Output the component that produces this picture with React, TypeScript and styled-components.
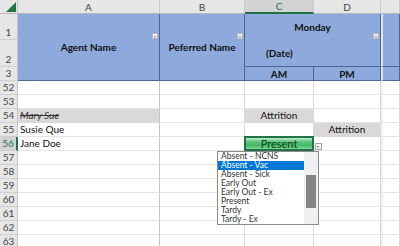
import React from "react";
import styled, { createGlobalStyle, css } from "styled-components";

const GlobalStyle = createGlobalStyle`
  html, body {
    margin: 0;
    padding: 0;
    background: #fff;
    overflow: hidden;
  }
  body {
    font-family: Lato, "Liberation Sans", Arial, sans-serif;
  }
`;

const GRID = "#dadada";
const HEAD_LINE = "#4d6794";
const BLUE = "#8ea9db";
const GREEN = "#217346";

const Sheet = styled.div`
  position: relative;
  display: grid;
  grid-template-columns: 18px 142px 85px 69px 67px 1fr;
  grid-template-rows: 14px 26px 27px 14px repeat(12, 14px);
  width: 400px;
  height: 246px;
  overflow: hidden;
  font-size: 10px;
  color: #111;
`;

type Place = { $c: number; $r: number; $w?: number; $h?: number };

const place = css<Place>`
  grid-column: ${(p) => p.$c} / span ${(p) => p.$w ?? 1};
  grid-row: ${(p) => p.$r} / span ${(p) => p.$h ?? 1};
`;

const Corner = styled.div<Place>`
  ${place};
  position: relative;
  background: #e6e6e6;
  border-right: 1px solid #c6c6c6;
  border-bottom: 1px solid #b8b8b8;
  box-sizing: border-box;
  &::after {
    content: "";
    position: absolute;
    right: 1px;
    bottom: 1px;
    border-style: solid;
    border-width: 0 0 10px 10px;
    border-color: transparent transparent ${GREEN} transparent;
  }
`;

const ColHead = styled.div<Place & { $active?: boolean }>`
  ${place};
  display: flex;
  align-items: center;
  justify-content: center;
  box-sizing: border-box;
  background: ${(p) => (p.$active ? "#d3d3d3" : "#e6e6e6")};
  color: ${(p) => (p.$active ? GREEN : "#444")};
  border-right: 1px solid #cbcbcb;
  border-bottom: ${(p) => (p.$active ? `2px solid ${GREEN}` : "1px solid #b8b8b8")};
  font-size: 10px;
`;

const RowHead = styled.div<Place & { $active?: boolean }>`
  ${place};
  display: flex;
  align-items: flex-end;
  justify-content: center;
  padding-bottom: 1px;
  box-sizing: border-box;
  background: ${(p) => (p.$active ? "#d3d3d3" : "#e6e6e6")};
  color: ${(p) => (p.$active ? GREEN : "#444")};
  border-bottom: 1px solid #d0d0d0;
  border-right: ${(p) => (p.$active ? `2px solid ${GREEN}` : "1px solid #c6c6c6")};
  font-size: 10px;
  line-height: 12px;
`;

const HeadCell = styled.div<Place & { $align?: string; $pad?: number; $edge?: boolean; $open?: boolean }>`
  ${place};
  position: relative;
  display: flex;
  align-items: center;
  justify-content: ${(p) => p.$align ?? "center"};
  padding-left: ${(p) => p.$pad ?? 0}px;
  box-sizing: border-box;
  background: ${BLUE};
  border-right: 1px solid ${HEAD_LINE};
  border-bottom: ${(p) => (p.$open ? "none" : `1px solid ${HEAD_LINE}`)};
  border-left: ${(p) => (p.$edge ? "2px solid #dfe6f2" : "none")};
  font-weight: 700;
  color: #111;
`;

const FilterButton = styled.span`
  position: absolute;
  top: 19px;
  right: 1px;
  width: 6px;
  height: 6px;
  box-sizing: border-box;
  background: #f5f5f5;
  border: 1px solid #b4b4b4;
  &::after {
    content: "";
    position: absolute;
    left: 1px;
    top: 1.5px;
    border-style: solid;
    border-width: 2px 1.5px 0 1.5px;
    border-color: #777 transparent transparent transparent;
  }
`;

const Cell = styled.div<
  Place & {
    $fill?: string;
    $align?: string;
    $strike?: boolean;
    $edge?: boolean;
    $line?: string;
  }
>`
  ${place};
  display: flex;
  align-items: center;
  justify-content: ${(p) => p.$align ?? "flex-start"};
  padding-left: ${(p) => (p.$align ? 0 : 2)}px;
  box-sizing: border-box;
  background: ${(p) => p.$fill ?? "#fff"};
  border-right: 1px solid ${(p) => p.$line ?? GRID};
  border-bottom: 1px solid ${(p) => (p.$fill ? p.$fill : "#e4e4e4")};
  border-left: ${(p) => (p.$edge ? "2px solid #f0f0f0" : "none")};
  line-height: 13px;
  white-space: nowrap;
  ${(p) =>
    p.$strike &&
    css`
      font-style: italic;
      text-decoration: line-through;
      color: #333;
    `}
`;

const PresentCell = styled.div<Place>`
  ${place};
  position: relative;
  display: flex;
  align-items: center;
  justify-content: center;
  box-sizing: border-box;
  background: linear-gradient(#c4ecce 0%, #58c477 35%, #44bb66 70%, #86d49b 100%);
  border: 2px solid ${GREEN};
  margin: -1px 0 0 -1px;
  color: #0a3f1c;
  font-size: 11px;
  line-height: 12px;
`;

const ListArrow = styled.span`
  position: absolute;
  right: -10px;
  bottom: -1px;
  width: 7px;
  height: 7px;
  box-sizing: border-box;
  background: #f4f4f4;
  border: 1px solid #a6a6a6;
  &::after {
    content: "";
    position: absolute;
    left: 1px;
    top: 2px;
    border-style: solid;
    border-width: 2px 1.5px 0 1.5px;
    border-color: #666 transparent transparent transparent;
  }
`;

const ListBox = styled.div`
  position: absolute;
  left: 217px;
  top: 151px;
  width: 102px;
  height: 74px;
  box-sizing: border-box;
  display: flex;
  background: #fff;
  border: 1px solid #8a8a8a;
  z-index: 2;
`;

const Options = styled.ul`
  flex: 1;
  margin: 0;
  padding: 0;
  list-style: none;
  overflow: hidden;
`;

const Option = styled.li<{ $selected?: boolean }>`
  height: 9px;
  line-height: 9px;
  padding-left: 3px;
  font-size: 8.5px;
  color: ${(p) => (p.$selected ? "#fff" : "#333")};
  background: ${(p) => (p.$selected ? "#0078d7" : "transparent")};
  white-space: nowrap;
`;

const ScrollTrack = styled.div`
  width: 14px;
  background: #f0f0f0;
  display: flex;
  justify-content: center;
  padding-top: 23px;
  box-sizing: border-box;
`;

const ScrollThumb = styled.div`
  width: 10px;
  height: 33px;
  background: #858585;
`;

const options = [
  "Absent - NCNS",
  "Absent - Vac",
  "Absent - Sick",
  "Early Out",
  "Early Out - Ex",
  "Present",
  "Tardy",
  "Tardy - Ex",
];

type Row = { n: number; a?: string; strike?: boolean; c?: string; d?: string; present?: boolean };

const rows: Row[] = [
  { n: 52 },
  { n: 53 },
  { n: 54, a: "Mary Sue", strike: true, c: "Attrition" },
  { n: 55, a: "Susie Que", d: "Attrition" },
  { n: 56, a: "Jane Doe", present: true },
  { n: 57 },
  { n: 58 },
  { n: 59 },
  { n: 60 },
  { n: 61 },
  { n: 62 },
  { n: 63 },
];

const FILL = "#d9d9d9";

export default function App() {
  return (
    <>
      <GlobalStyle />
      <Sheet>
        <Corner $c={1} $r={1} />
        {["A", "B", "C", "D", ""].map((l, i) => (
          <ColHead key={i} $c={i + 2} $r={1} $active={l === "C"}>
            {l}
          </ColHead>
        ))}

        {[1, 2, 3].map((n) => (
          <RowHead key={n} $c={1} $r={n + 1}>
            {n}
          </RowHead>
        ))}

        <HeadCell $c={2} $r={2} $h={3}>
          Agent Name
          <FilterButton />
        </HeadCell>
        <HeadCell $c={3} $r={2} $h={3}>
          Peferred Name
          <FilterButton />
        </HeadCell>
        <HeadCell $c={4} $r={2} $w={2} $open>
          Monday
          <FilterButton />
        </HeadCell>
        <HeadCell $c={4} $r={3} $w={2} $align="flex-start" $pad={21}>
          (Date)
        </HeadCell>
        <HeadCell $c={4} $r={4}>AM</HeadCell>
        <HeadCell $c={5} $r={4}>PM</HeadCell>
        <HeadCell $c={6} $r={2} $h={2} $edge />
        <HeadCell $c={6} $r={4} $edge />

        {rows.map((row, i) => {
          const r = i + 5;
          return (
            <React.Fragment key={row.n}>
              <RowHead $c={1} $r={r} $active={row.present}>
                {row.n}
              </RowHead>
              <Cell $c={2} $r={r} $line="#c4c4c4" $fill={row.strike ? FILL : undefined} $strike={row.strike}>
                {row.a}
              </Cell>
              <Cell $c={3} $r={r} />
              {row.present ? (
                <PresentCell $c={4} $r={r}>
                  Present
                  <ListArrow />
                </PresentCell>
              ) : (
                <Cell $c={4} $r={r} $align="center" $fill={row.c ? FILL : undefined}>
                  {row.c}
                </Cell>
              )}
              <Cell $c={5} $r={r} $align="center" $fill={row.d ? FILL : undefined}>
                {row.d}
              </Cell>
              <Cell $c={6} $r={r} $edge />
            </React.Fragment>
          );
        })}

        <ListBox>
          <Options>
            {options.map((o) => (
              <Option key={o} $selected={o === "Absent - Vac"}>
                {o}
              </Option>
            ))}
          </Options>
          <ScrollTrack>
            <ScrollThumb />
          </ScrollTrack>
        </ListBox>
      </Sheet>
    </>
  );
}
